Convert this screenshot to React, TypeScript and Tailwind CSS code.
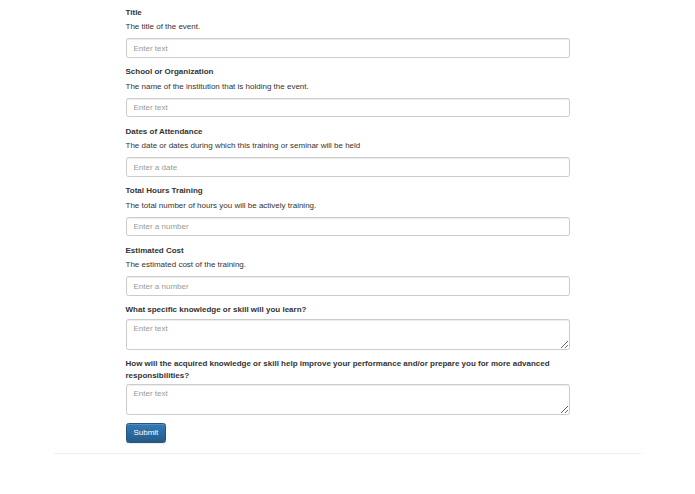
import React from "react"

const font = { fontFamily: '"Liberation Sans", Arial, Helvetica, sans-serif' }

type Field = {
  label: string
  help?: string
  placeholder: string
  multiline?: boolean
}

const fields: Field[] = [
  { label: "Title", help: "The title of the event.", placeholder: "Enter text" },
  {
    label: "School or Organization",
    help: "The name of the institution that is holding the event.",
    placeholder: "Enter text",
  },
  {
    label: "Dates of Attendance",
    help: "The date or dates during which this training or seminar will be held",
    placeholder: "Enter a date",
  },
  {
    label: "Total Hours Training",
    help: "The total number of hours you will be actively training.",
    placeholder: "Enter a number",
  },
  {
    label: "Estimated Cost",
    help: "The estimated cost of the training.",
    placeholder: "Enter a number",
  },
  {
    label: "What specific knowledge or skill will you learn?",
    placeholder: "Enter text",
    multiline: true,
  },
  {
    label:
      "How will the acquired knowledge or skill help improve your performance and/or prepare you for more advanced responsibilities?",
    placeholder: "Enter text",
    multiline: true,
  },
]

const controlCls =
  "block w-full rounded-[2.5px] border border-[#ccc] bg-white px-[7px] text-[8px] text-[#555] shadow-[inset_0_1px_1px_rgba(0,0,0,0.075)] outline-none placeholder:text-[#999]"

function FormGroup({ field }: { field: Field }) {
  return (
    <div className="mb-[8.6px]">
      <label className="mb-[2.9px] block text-[8px] font-bold leading-[11.44px] text-[#333]">
        {field.label}
      </label>
      {field.help && (
        <p className="mb-[5.7px] text-[8px] leading-[11.44px] text-[#333]">
          {field.help}
        </p>
      )}
      {field.multiline ? (
        <textarea
          rows={2}
          placeholder={field.placeholder}
          className={controlCls + " h-[30.9px] resize-y py-[3.4px] leading-[11.44px]"}
        />
      ) : (
        <input
          type="text"
          placeholder={field.placeholder}
          className={controlCls + " h-[19.45px] py-[3.4px] leading-[11.44px]"}
        />
      )}
    </div>
  )
}

export default function App() {
  return (
    <div className="min-h-[494px] bg-white pt-[7px] text-[8px] leading-[11.44px] text-[#333]" style={font}>
      <div className="mx-auto w-[444px]">
        <form onSubmit={(e) => e.preventDefault()}>
          {fields.map((f) => (
            <FormGroup key={f.label} field={f} />
          ))}
          <button
            type="submit"
            className="block h-[19.45px] rounded-[2.5px] border border-[#245580] bg-gradient-to-b from-[#337ab7] to-[#265a88] px-[6.9px] text-[8px] leading-[11.44px] text-white shadow-[inset_0_1px_0_rgba(255,255,255,0.15),0_1px_1px_rgba(0,0,0,0.075)]"
          >
            Submit
          </button>
        </form>
      </div>
      <hr className="mx-auto mt-[10.4px] w-[587px] border-0 border-t border-[#eee]" />
    </div>
  )
}
